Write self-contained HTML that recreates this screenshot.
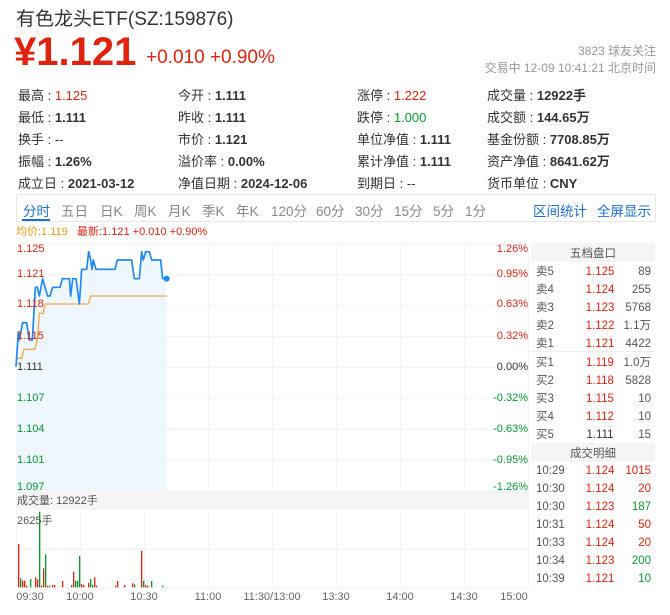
<!DOCTYPE html>
<html><head><meta charset="utf-8"><style>
*{margin:0;padding:0;box-sizing:border-box}
body{width:670px;height:615px;background:#fff;font-family:"Liberation Sans","Noto Sans CJK SC",sans-serif;color:#333;position:relative;overflow:hidden}
.a{position:absolute;white-space:nowrap}
.r{color:#e0230f}.g{color:#0a9632}.gr{color:#999}
.info{font-size:13px;color:#333}
.info b{font-weight:bold}
.tab{font-size:13.5px;color:#888}
</style></head><body>
<div class="a" style="left:16px;top:4px;font-size:19px;color:#333">有色龙头ETF(SZ:159876)</div>
<div class="a r" style="left:14px;top:30px;font-size:40px;font-weight:bold">¥1.121</div>
<div class="a r" style="left:146px;top:47px;font-size:19px">+0.010 +0.90%</div>
<div class="a gr" style="right:14px;top:42px;font-size:12px">3823 球友关注</div>
<div class="a gr" style="right:14px;top:59px;font-size:12px">交易中 12-09 10:41:21 北京时间</div>

<div class="info">
<div class="a" style="left:18px;top:85px">最高 : <span class="r">1.125</span></div>
<div class="a" style="left:178px;top:85px">今开 : <b>1.111</b></div>
<div class="a" style="left:357px;top:85px">涨停 : <span class="r">1.222</span></div>
<div class="a" style="left:487px;top:85px">成交量 : <b>12922手</b></div>
<div class="a" style="left:18px;top:107px">最低 : <b>1.111</b></div>
<div class="a" style="left:178px;top:107px">昨收 : <b>1.111</b></div>
<div class="a" style="left:357px;top:107px">跌停 : <span class="g">1.000</span></div>
<div class="a" style="left:487px;top:107px">成交额 : <b>144.65万</b></div>
<div class="a" style="left:18px;top:129px">换手 : --</div>
<div class="a" style="left:178px;top:129px">市价 : <b>1.121</b></div>
<div class="a" style="left:357px;top:129px">单位净值 : <b>1.111</b></div>
<div class="a" style="left:487px;top:129px">基金份额 : <b>7708.85万</b></div>
<div class="a" style="left:18px;top:151px">振幅 : <b>1.26%</b></div>
<div class="a" style="left:178px;top:151px">溢价率 : <b>0.00%</b></div>
<div class="a" style="left:357px;top:151px">累计净值 : <b>1.111</b></div>
<div class="a" style="left:487px;top:151px">资产净值 : <b>8641.62万</b></div>
<div class="a" style="left:18px;top:173px">成立日 : <b>2021-03-12</b></div>
<div class="a" style="left:178px;top:173px">净值日期 : <b>2024-12-06</b></div>
<div class="a" style="left:357px;top:173px">到期日 : --</div>
<div class="a" style="left:487px;top:173px">货币单位 : <b>CNY</b></div>
</div>

<div class="a" style="left:16px;top:194px;width:640px;height:28px;border:1px solid #e8e8e8"></div>
<div class="tab">
<div class="a" style="left:23px;top:200px;color:#1a6fd1">分时</div>
<div class="a" style="left:22px;top:219px;width:28px;height:2px;background:#1a6fd1"></div>
<div class="a" style="left:61px;top:200px">五日</div>
<div class="a" style="left:100px;top:200px">日K</div>
<div class="a" style="left:134px;top:200px">周K</div>
<div class="a" style="left:168px;top:200px">月K</div>
<div class="a" style="left:202px;top:200px">季K</div>
<div class="a" style="left:236px;top:200px">年K</div>
<div class="a" style="left:271px;top:200px">120分</div>
<div class="a" style="left:316px;top:200px">60分</div>
<div class="a" style="left:355px;top:200px">30分</div>
<div class="a" style="left:394px;top:200px">15分</div>
<div class="a" style="left:433px;top:200px">5分</div>
<div class="a" style="left:465px;top:200px">1分</div>
<div class="a" style="left:533px;top:200px;color:#1a6fd1">区间统计</div>
<div class="a" style="left:597px;top:200px;color:#1a6fd1">全屏显示</div>
</div>
<div class="a" style="left:16px;top:223px;font-size:11px;color:#f29b14">均价:1.119</div>
<div class="a r" style="left:77px;top:223px;font-size:11px">最新:1.121 +0.010 +0.90%</div>

<svg class="a" style="left:0;top:0" width="670" height="615">
<g stroke="#f4f4f4" stroke-width="1">
<line x1="16" y1="243.5" x2="528" y2="243.5"/><line x1="16" y1="274.5" x2="528" y2="274.5"/><line x1="16" y1="305.5" x2="528" y2="305.5"/><line x1="16" y1="336.5" x2="528" y2="336.5"/><line x1="16" y1="367.5" x2="528" y2="367.5"/><line x1="16" y1="398.5" x2="528" y2="398.5"/><line x1="16" y1="429.5" x2="528" y2="429.5"/><line x1="16" y1="460.5" x2="528" y2="460.5"/>
<line x1="16" y1="549.5" x2="528" y2="549.5"/><line x1="16" y1="587.5" x2="528" y2="587.5"/>
<line x1="80.5" y1="243" x2="80.5" y2="490"/><line x1="144.5" y1="243" x2="144.5" y2="490"/><line x1="208.5" y1="243" x2="208.5" y2="490"/><line x1="272.5" y1="243" x2="272.5" y2="490"/><line x1="336.5" y1="243" x2="336.5" y2="490"/><line x1="400.5" y1="243" x2="400.5" y2="490"/><line x1="464.5" y1="243" x2="464.5" y2="490"/><line x1="528.5" y1="243" x2="528.5" y2="588"/>
<line x1="80.5" y1="510" x2="80.5" y2="588"/><line x1="144.5" y1="510" x2="144.5" y2="588"/><line x1="208.5" y1="510" x2="208.5" y2="588"/><line x1="272.5" y1="510" x2="272.5" y2="588"/><line x1="336.5" y1="510" x2="336.5" y2="588"/><line x1="400.5" y1="510" x2="400.5" y2="588"/><line x1="464.5" y1="510" x2="464.5" y2="588"/><line x1="16.5" y1="510" x2="16.5" y2="588"/>
</g>
<rect x="16" y="490" width="512" height="20" fill="#f5f5f5"/>
<g transform="translate(0,230) scale(0.33333)">
<polygon fill="#eef6fe" points="48,410 55,305 58,330 68,278 80,278 88,330 97,330 106,172 112,172 118,198 128,146 135,172 143,198 150,198 158,172 180,172 187,146 208,146 212,198 218,146 228,146 238,222 245,118 260,118 266,65 272,90 276,118 280,90 288,118 345,118 352,90 395,90 403,146 418,146 425,65 430,90 437,65 448,65 455,90 482,90 488,146 500,146 500,780 48,780"/>
<polyline fill="none" stroke="#f5a94a" stroke-width="4" points="48,385 65,385 72,358 105,358 112,330 118,250 130,250 135,222 265,222 272,198 500,198"/>
<polyline fill="none" stroke="#1e88f0" stroke-width="5" stroke-linejoin="round" points="48,410 55,305 58,330 68,278 80,278 88,330 97,330 106,172 112,172 118,198 128,146 135,172 143,198 150,198 158,172 180,172 187,146 208,146 212,198 218,146 228,146 238,222 245,118 260,118 266,65 272,90 276,118 280,90 288,118 345,118 352,90 395,90 403,146 418,146 425,65 430,90 437,65 448,65 455,90 482,90 488,146 500,146"/>
<circle cx="500" cy="146" r="9" fill="#1e88f0"/>
</g>
<g transform="translate(0,490) scale(0.33333)">
<g fill="#e0230f"><rect x="54" y="162" width="4" height="130"/><rect x="66" y="272" width="4" height="20"/><rect x="72" y="272" width="4" height="20"/><rect x="78" y="287" width="4" height="5"/><rect x="105" y="262" width="4" height="30"/><rect x="111" y="268" width="4" height="24"/><rect x="123" y="287" width="4" height="5"/><rect x="129" y="235" width="4" height="57"/><rect x="141" y="287" width="4" height="5"/><rect x="156" y="285" width="4" height="7"/><rect x="162" y="285" width="4" height="7"/><rect x="186" y="273" width="4" height="19"/><rect x="219" y="245" width="4" height="47"/><rect x="243" y="282" width="4" height="10"/><rect x="249" y="285" width="4" height="7"/><rect x="264" y="278" width="4" height="14"/><rect x="282" y="262" width="4" height="30"/><rect x="288" y="287" width="4" height="5"/><rect x="345" y="287" width="4" height="5"/><rect x="351" y="273" width="4" height="19"/><rect x="372" y="285" width="4" height="7"/><rect x="396" y="280" width="4" height="12"/><rect x="423" y="183" width="4" height="109"/><rect x="435" y="285" width="4" height="7"/><rect x="441" y="287" width="4" height="5"/></g>
<g fill="#0a9632"><rect x="60" y="265" width="4" height="27"/><rect x="90" y="267" width="4" height="25"/><rect x="117" y="65" width="4" height="227"/><rect x="135" y="193" width="4" height="99"/><rect x="147" y="287" width="4" height="5"/><rect x="213" y="285" width="4" height="7"/><rect x="225" y="273" width="4" height="19"/><rect x="231" y="273" width="4" height="19"/><rect x="237" y="198" width="4" height="94"/><rect x="270" y="267" width="4" height="25"/><rect x="276" y="285" width="4" height="7"/><rect x="402" y="283" width="4" height="9"/><rect x="429" y="273" width="4" height="19"/><rect x="453" y="273" width="4" height="19"/><rect x="486" y="287" width="4" height="5"/></g>
</g>
<g font-size="11" font-family="Liberation Sans, Noto Sans CJK SC, sans-serif">
<text x="17" y="252" fill="#e0230f">1.125</text><text x="17" y="277" fill="#e0230f">1.121</text><text x="17" y="307" fill="#e0230f">1.118</text><text x="17" y="339" fill="#e0230f">1.115</text><text x="17" y="370" fill="#333">1.111</text><text x="17" y="401" fill="#0a9632">1.107</text><text x="17" y="432" fill="#0a9632">1.104</text><text x="17" y="463" fill="#0a9632">1.101</text><text x="17" y="490" fill="#0a9632">1.097</text>
<g text-anchor="end"><text x="528" y="252" fill="#e0230f">1.26%</text><text x="528" y="277" fill="#e0230f">0.95%</text><text x="528" y="307" fill="#e0230f">0.63%</text><text x="528" y="339" fill="#e0230f">0.32%</text><text x="528" y="370" fill="#333">0.00%</text><text x="528" y="401" fill="#0a9632">-0.32%</text><text x="528" y="432" fill="#0a9632">-0.63%</text><text x="528" y="463" fill="#0a9632">-0.95%</text><text x="528" y="490" fill="#0a9632">-1.26%</text></g>
<text x="17" y="504" fill="#555">成交量: 12922手</text>
<text x="17" y="524" fill="#555">2625手</text>
<g fill="#666" text-anchor="middle"><text x="30" y="600">09:30</text><text x="80" y="600">10:00</text><text x="144" y="600">10:30</text><text x="208" y="600">11:00</text><text x="272" y="600">11:30/13:00</text><text x="336" y="600">13:30</text><text x="400" y="600">14:00</text><text x="464" y="600">14:30</text><text x="514" y="600">15:00</text></g>
</g>
<rect x="531" y="243" width="124" height="19" fill="#f5f5f5"/>
<rect x="531" y="443" width="124" height="19" fill="#f5f5f5"/>
<line x1="531" y1="351.5" x2="655" y2="351.5" stroke="#eee"/>
<g font-size="11.5" font-family="Liberation Sans, Noto Sans CJK SC, sans-serif">
<text x="593" y="257" fill="#555" text-anchor="middle">五档盘口</text>
<text x="593" y="457" fill="#555" text-anchor="middle">成交明细</text>
<g fill="#555"><text x="536" y="275">卖5</text><text x="536" y="293">卖4</text><text x="536" y="311">卖3</text><text x="536" y="329">卖2</text><text x="536" y="347">卖1</text><text x="536" y="366">买1</text><text x="536" y="384">买2</text><text x="536" y="402">买3</text><text x="536" y="420">买4</text><text x="536" y="438">买5</text>
<text x="536" y="474">10:29</text><text x="536" y="492">10:30</text><text x="536" y="510">10:30</text><text x="536" y="528">10:31</text><text x="536" y="546">10:33</text><text x="536" y="564">10:34</text><text x="536" y="582">10:39</text></g>
<g fill="#e0230f" text-anchor="middle"><text x="600" y="275">1.125</text><text x="600" y="293">1.124</text><text x="600" y="311">1.123</text><text x="600" y="329">1.122</text><text x="600" y="347">1.121</text><text x="600" y="366">1.119</text><text x="600" y="384">1.118</text><text x="600" y="402">1.115</text><text x="600" y="420">1.112</text><text x="600" y="438" fill="#333">1.111</text>
<text x="600" y="474">1.124</text><text x="600" y="492">1.124</text><text x="600" y="510">1.123</text><text x="600" y="528">1.124</text><text x="600" y="546">1.124</text><text x="600" y="564">1.123</text><text x="600" y="582">1.121</text></g>
<g fill="#555" text-anchor="end"><text x="651" y="275">89</text><text x="651" y="293">255</text><text x="651" y="311">5768</text><text x="651" y="329">1.1万</text><text x="651" y="347">4422</text><text x="651" y="366">1.0万</text><text x="651" y="384">5828</text><text x="651" y="402">10</text><text x="651" y="420">10</text><text x="651" y="438">15</text></g>
<g text-anchor="end"><text x="651" y="474" fill="#e0230f">1015</text><text x="651" y="492" fill="#e0230f">20</text><text x="651" y="510" fill="#0a9632">187</text><text x="651" y="528" fill="#e0230f">50</text><text x="651" y="546" fill="#e0230f">20</text><text x="651" y="564" fill="#0a9632">200</text><text x="651" y="582" fill="#0a9632">10</text></g>
</g>
</svg>
</body></html>
